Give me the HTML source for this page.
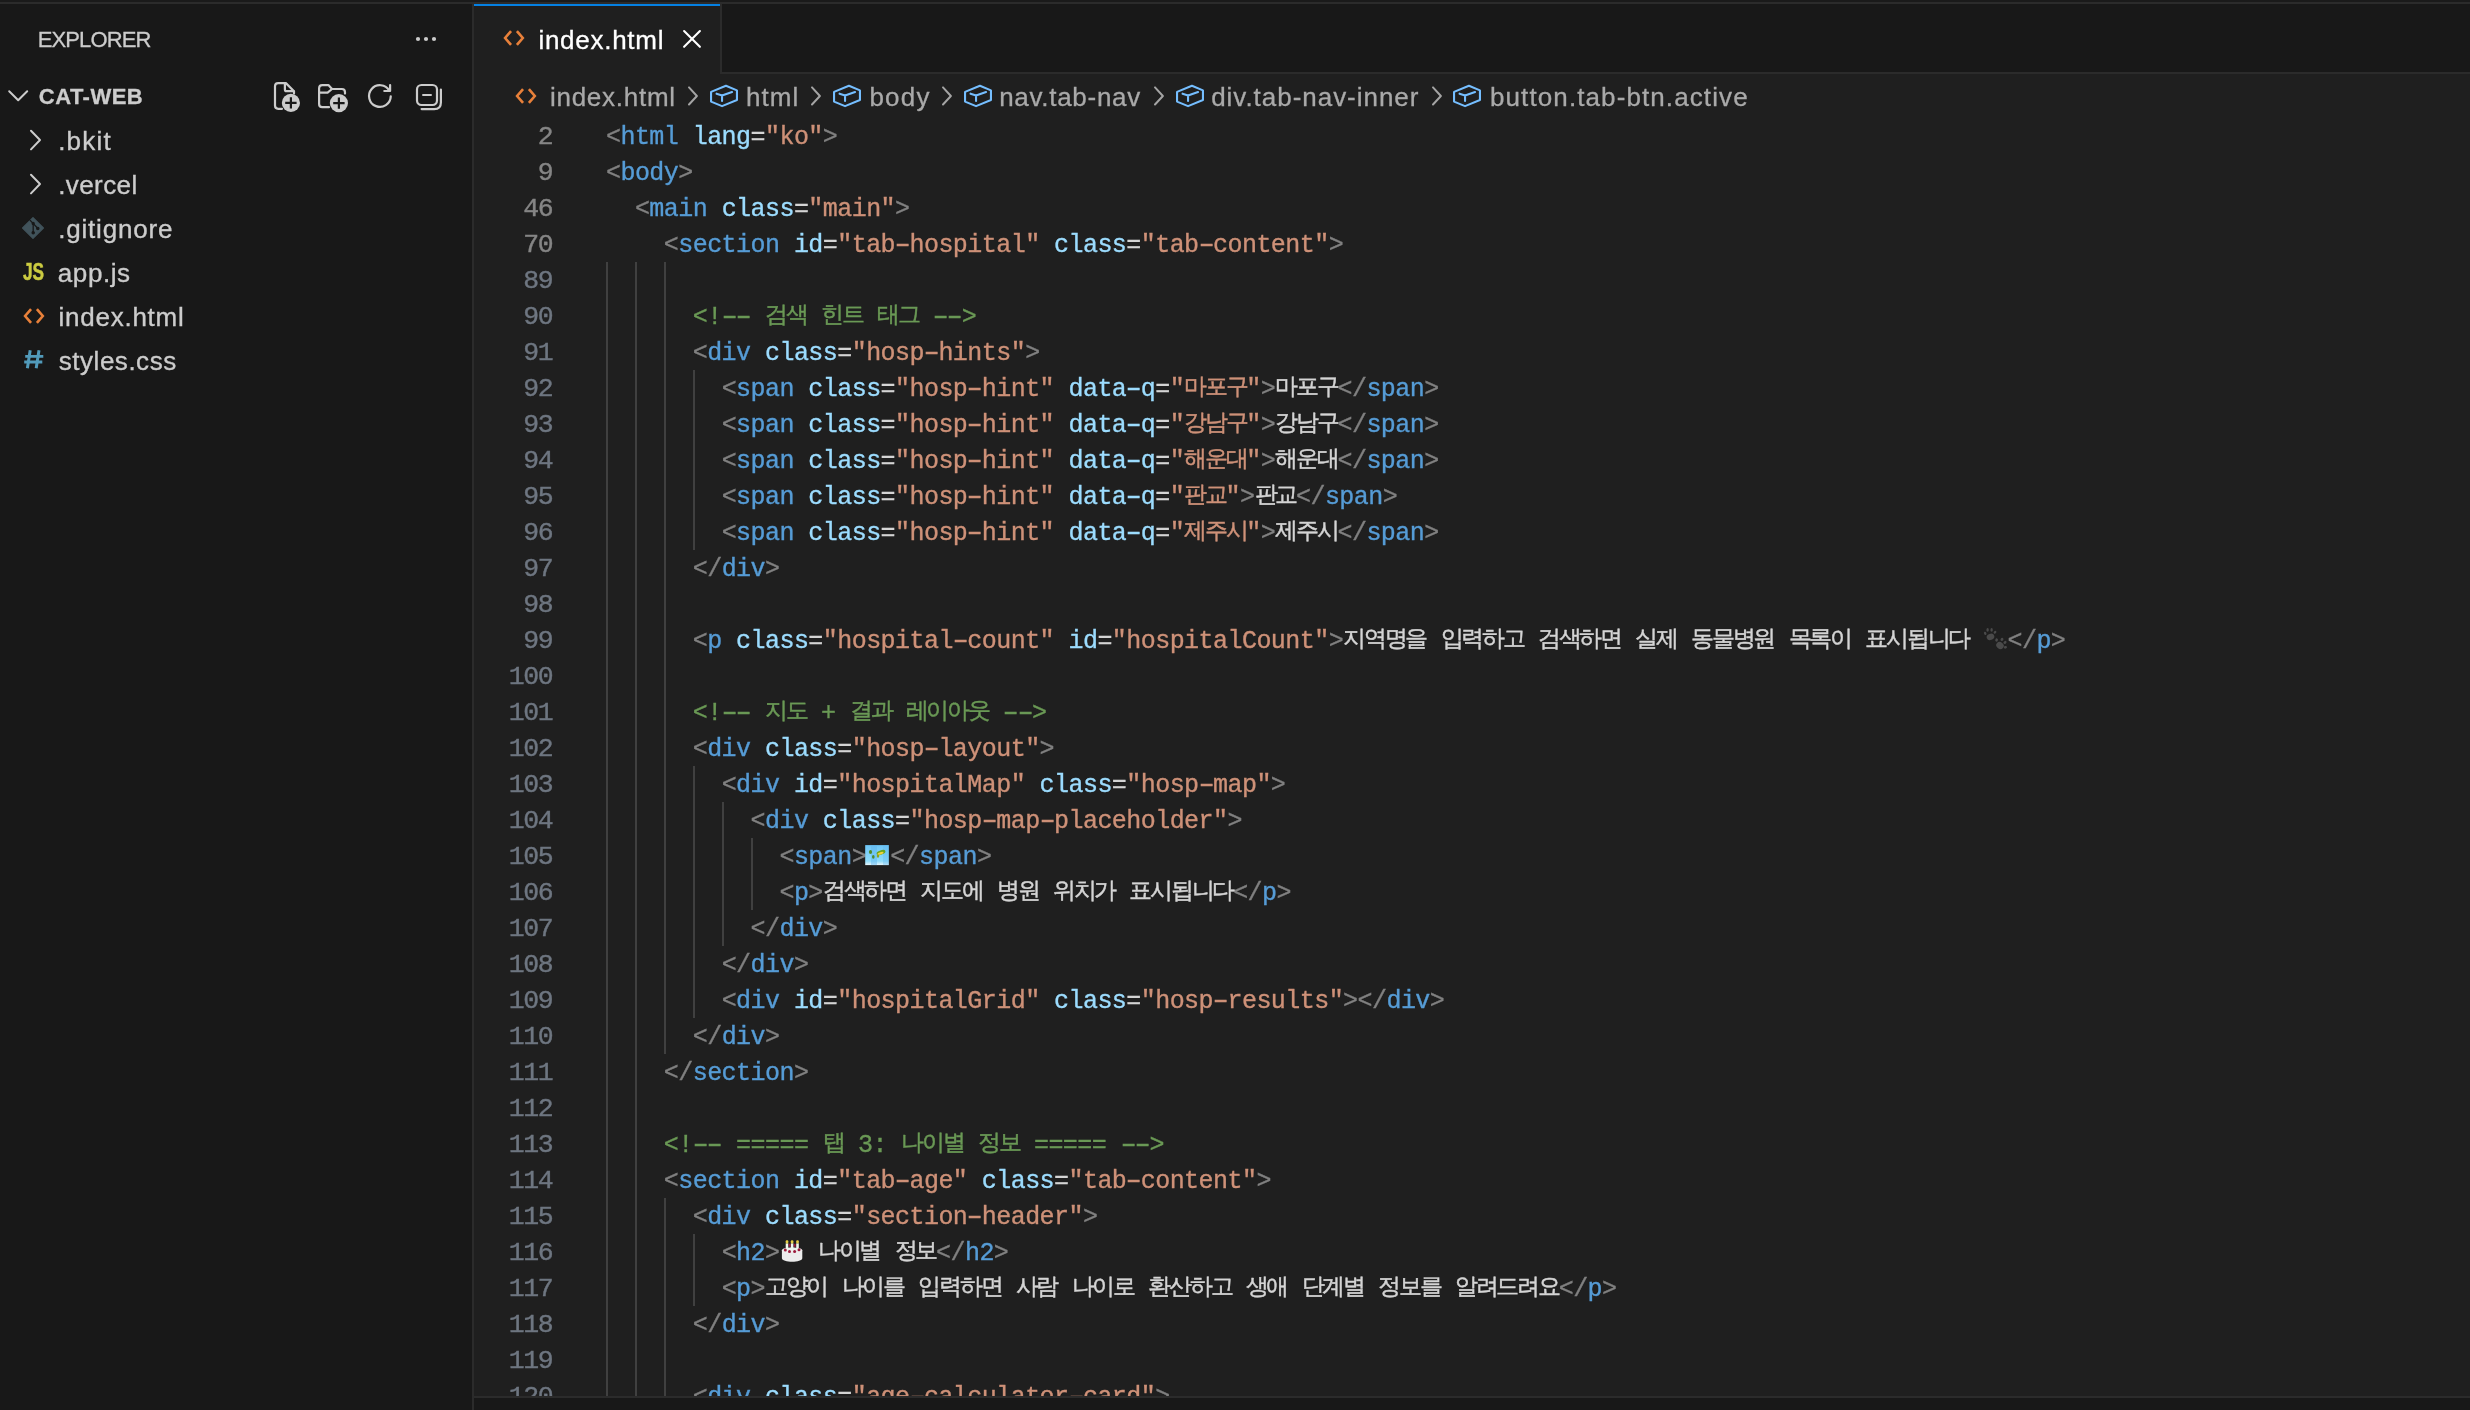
<!DOCTYPE html>
<html lang="en"><head><meta charset="utf-8"><title>index.html - cat-web</title>
<style>
*{margin:0;padding:0;box-sizing:border-box}
html,body{width:2470px;height:1410px;overflow:hidden;background:#1f1f1f}
body{position:relative;font-family:"Liberation Sans",sans-serif;color:#cccccc;-webkit-font-smoothing:antialiased}
.abs{position:absolute;display:block}
svg{display:block;overflow:visible}
#root{position:absolute;left:0;top:0;width:2470px;height:1410px;will-change:transform}
#top1{position:absolute;left:0;top:0;width:2470px;height:2px;background:#1a1a1a}
#top2{position:absolute;left:0;top:2px;width:2470px;height:2px;background:#2b2b2b}
#side{position:absolute;left:0;top:4px;width:472px;height:1406px;background:#181818}
#sideb{position:absolute;left:472px;top:4px;width:2px;height:1406px;background:#2b2b2b}
#tabs{position:absolute;left:474px;top:4px;width:1996px;height:70px;background:#181818;border-bottom:2px solid #2b2b2b}
#tab{position:absolute;left:474px;top:4px;width:248px;height:70px;background:#1f1f1f;border-right:2px solid #2b2b2b}
#tabl{position:absolute;left:474px;top:4px;width:246px;height:2px;background:#0580e2}
#tabt{-webkit-text-stroke:0.3px currentColor;position:absolute;left:538.4px;letter-spacing:0.73px;top:4px;height:70px;line-height:70px;font-size:26px;color:#ffffff;white-space:nowrap;padding-top:1px}
#bc{position:absolute;left:474px;top:74px;width:1996px;height:44px;background:#1f1f1f}
.bt{-webkit-text-stroke:0.3px currentColor;position:absolute;top:0;height:44px;line-height:44px;font-size:26px;color:#a9a9a9;white-space:nowrap;padding-top:1px}
#code{position:absolute;left:474px;top:118px;width:1996px;height:1278px;overflow:hidden;background:#1f1f1f}
#botb{position:absolute;left:474px;top:1396px;width:1996px;height:2px;background:#2b2b2b}
#bot{position:absolute;left:474px;top:1398px;width:1996px;height:12px;background:#181818}
.ln{-webkit-text-stroke:0.4px currentColor;position:absolute;left:0;width:78.2px;height:36px;line-height:36px;text-align:right;font-family:"Liberation Mono",monospace;font-size:26.5px;letter-spacing:-1.45px;color:#6e7681;white-space:pre;padding-top:1px}
.ln.st{color:#858585}
.cl{-webkit-text-stroke:0.35px currentColor;position:absolute;left:132px;height:36px;line-height:36px;font-family:"Liberation Mono",monospace;font-size:25px;letter-spacing:-0.55px;color:#cccccc;white-space:pre;padding-top:2px}
.cl span{display:inline}
.b{color:#808080}.t{color:#569cd6}.a{color:#9cdcfe}.s{color:#ce9178}.c{color:#6a9955}.x{color:#d4d4d4}
.cl span.k{line-height:1;position:relative;top:-2.4px;-webkit-text-stroke:0.45px currentColor;display:inline-block;font-size:23px;letter-spacing:-2.26px;white-space:nowrap;vertical-align:baseline;font-family:"Liberation Sans",sans-serif}
svg.e{display:inline-block;vertical-align:top;width:24px;height:36px;letter-spacing:0;position:relative;top:-3.8px}
.cl span.h{line-height:1;display:inline-block;transform:scaleX(1.65)}
.g{position:absolute;width:2px;background:#404040}
.hd{-webkit-text-stroke:0.3px currentColor;position:absolute;left:38.9px;font-size:22px;white-space:nowrap;height:44px;line-height:44px}
.row{-webkit-text-stroke:0.35px currentColor;position:absolute;left:0;width:472px;height:44px;line-height:44px;font-size:26px;color:#cccccc;white-space:nowrap;padding-top:1px}
.row .lbl{position:absolute;left:59.3px}
.jsi{-webkit-text-stroke:0.5px currentColor;position:absolute;left:23.2px;height:44px;line-height:44px;font-size:23px;font-weight:bold;color:#cbcb41;transform-origin:0 50%;transform:scaleX(.75);letter-spacing:0}
</style></head><body><div id="root">
<div id="top1"></div><div id="top2"></div>
<div id="side">
</div>
<div class="hd" style="top:18px;left:37.8px;letter-spacing:-0.9px" id="hexp">EXPLORER</div>
<div class="hd" style="top:74.5px;left:38.8px;font-weight:bold;letter-spacing:0.48px" id="hcat">CAT-WEB</div>

<svg class="abs" style="left:414px;top:35px" width="24" height="8" viewBox="0 0 24 8"><g fill="#cccccc"><circle cx="4" cy="4" r="2.1"/><circle cx="12" cy="4" r="2.1"/><circle cx="20" cy="4" r="2.1"/></g></svg>
<svg class="abs" style="left:6px;top:84px" width="24" height="24" viewBox="0 0 24 24"><path d="M3.2 7.3 L12.2 16.2 L21.2 7.3" fill="none" stroke="#cccccc" stroke-width="2" stroke-linecap="round" stroke-linejoin="round"/></svg>
<svg class="abs" style="left:268px;top:78px" width="40" height="40" viewBox="268 78 40 40"><g fill="none" stroke="#cccccc" stroke-width="2.2" stroke-linecap="round" stroke-linejoin="round"><path d="M294 93.5 L294 91.2 L285.9 83.1 L278.2 83.1 Q275 83.1 275 86.3 L275 105.6 Q275 108.8 278.2 108.8 L282 108.8"/><path d="M284.9 83.6 L284.9 89.4 Q284.9 91.2 286.7 91.2 L293.6 91.2"/></g><circle cx="290.9" cy="102.9" r="9.1" fill="#cccccc"/><path d="M285.2 102.9 L296.6 102.9 M290.9 97.2 L290.9 108.6" stroke="#181818" stroke-width="2.2" stroke-linecap="butt" fill="none"/></svg>
<svg class="abs" style="left:312px;top:78px" width="40" height="40" viewBox="312 78 40 40"><g fill="none" stroke="#cccccc" stroke-width="2.2" stroke-linecap="round" stroke-linejoin="round"><path d="M345 93.6 L345 92.2 Q345 89 341.8 89 L332 89 L328.4 85.1 L322.3 85.1 Q319.1 85.1 319.1 88.3 L319.1 104 Q319.1 107.2 322.3 107.2 L329 107.2"/><path d="M319.1 92.6 L327.6 92.6 L332 89"/></g><circle cx="338.9" cy="103.1" r="9.1" fill="#cccccc"/><path d="M333.2 103.1 L344.6 103.1 M338.9 97.4 L338.9 108.8" stroke="#181818" stroke-width="2.2" stroke-linecap="butt" fill="none"/></svg>
<svg class="abs" style="left:360px;top:78px" width="40" height="40" viewBox="360 78 40 40"><g fill="none" stroke="#cccccc" stroke-width="2.2" stroke-linecap="round" stroke-linejoin="round"><path d="M390.75 96.4 A10.85 10.85 0 1 1 389.3 90.6"/><path d="M384.3 91 L390.1 91 L390.1 85.0"/></g></svg>
<svg class="abs" style="left:408px;top:78px" width="40" height="40" viewBox="408 78 40 40"><g fill="none" stroke="#cccccc" stroke-width="2.2" stroke-linecap="round" stroke-linejoin="round"><rect x="417" y="85" width="20" height="20" rx="4.5"/><path d="M423.1 95 L430.9 95"/><path d="M440.9 89.6 L440.9 102.4 Q440.9 109.1 434.2 109.1 L421.6 109.1"/></g></svg>

<div class="row" style="top:118px"><span class="lbl" style="left:58.2px;letter-spacing:1.20px">.bkit</span></div><svg class="abs" style="left:26px;top:128px" width="20" height="24" viewBox="0 0 20 24"><path d="M5 2.8 L14 12 L5 21.4" fill="none" stroke="#cccccc" stroke-width="2" stroke-linecap="round" stroke-linejoin="round"/></svg><div class="row" style="top:162px"><span class="lbl" style="left:58.2px;letter-spacing:0.40px">.vercel</span></div><svg class="abs" style="left:26px;top:172px" width="20" height="24" viewBox="0 0 20 24"><path d="M5 2.8 L14 12 L5 21.4" fill="none" stroke="#cccccc" stroke-width="2" stroke-linecap="round" stroke-linejoin="round"/></svg><div class="row" style="top:206px"><span class="lbl" style="left:58.2px;letter-spacing:0.80px">.gitignore</span></div><svg class="abs" style="left:20.4px;top:214.5px" width="26" height="26" viewBox="-13 -13 26 26"><path d="M0 -10.4 L10.4 0 L0 10.4 L-10.4 0 Z" fill="#41535b" stroke="#41535b" stroke-width="1.2" stroke-linejoin="round"/><g stroke="#181818" stroke-width="1.3" fill="#181818" stroke-linecap="round"><path d="M0.2 -4.5 L0.2 4.6 M-2.8 -7.6 L4.7 0.3" fill="none"/><circle cx="0.2" cy="4.7" r="1.1"/><circle cx="4.8" cy="0.4" r="1.1"/><circle cx="0.2" cy="-4.6" r="1.0"/></g></svg><div class="row" style="top:250px"><span class="lbl" style="left:57.8px;letter-spacing:0.58px">app.js</span></div><div class="jsi" style="top:250px">JS</div><div class="row" style="top:294px"><span class="lbl" style="left:58.6px;letter-spacing:0.74px">index.html</span></div><svg class="abs" style="left:21.8px;top:306.6px" width="24" height="18" viewBox="-12 -9 24 18"><g fill="none" stroke="#e8803a" stroke-width="2.6" stroke-linejoin="miter" stroke-miterlimit="10"><path d="M-2.95 -6.95 L-8.9 0 L-2.95 6.95"/><path d="M2.9 -6.95 L8.8 0 L2.9 6.95"/></g></svg><div class="row" style="top:338px"><span class="lbl" style="left:58.8px;letter-spacing:0.52px">styles.css</span></div><svg class="abs" style="left:22px;top:349px" width="24" height="22" viewBox="0 0 24 22"><g stroke="#519aba" stroke-width="3" fill="none"><path d="M8.2 1.2 L5.4 19.3 M17 1.2 L14.2 19.3"/><path d="M3.2 7.4 L21.3 7.4 M2.2 13 L20.3 13" stroke-width="2.8"/></g></svg>
<div id="sideb"></div>
<div id="tabs"></div>
<div id="tab"></div><div id="tabl"></div>
<svg class="abs" style="left:501.7px;top:29.3px" width="24" height="18" viewBox="-12 -9 24 18"><g fill="none" stroke="#e8803a" stroke-width="2.6" stroke-linejoin="miter" stroke-miterlimit="10"><path d="M-2.95 -6.95 L-8.9 0 L-2.95 6.95"/><path d="M2.9 -6.95 L8.8 0 L2.9 6.95"/></g></svg>
<div id="tabt">index.html</div>
<svg class="abs" style="left:680px;top:27px" width="24" height="24" viewBox="0 0 24 24"><path d="M4.1 4.0 L19.9 19.8 M19.9 4.0 L4.1 19.8" stroke="#ffffff" stroke-width="2.1" stroke-linecap="round" fill="none"/></svg>
<div id="bc"><span class="bt" style="left:75.9px;letter-spacing:0.75px">index.html</span><span class="abs" style="left:212.1px;top:10px"><svg class="chev" width="16" height="24" viewBox="0 0 16 24"><path d="M3 3.4 L10.9 11.95 L3 20.5" fill="none" stroke="#a4a4a4" stroke-width="2" stroke-linecap="round" stroke-linejoin="round"/></svg></span><span class="abs" style="left:233.8px;top:6px"><svg class="cube" width="32" height="32" viewBox="0 0 32 32"><g fill="none" stroke="#75beff" stroke-width="2.1" stroke-linejoin="round" stroke-linecap="round"><path d="M17.95 5.7 L28.95 10.4 L28.95 20 L14.05 26.1 L3.05 21.6 L3.05 11.9 Z"/><path d="M8.55 13.7 L14.05 15.4 L24.05 12 M14.05 15.4 L14.05 20.9"/></g></svg></span><span class="bt" style="left:271.9px;letter-spacing:1.10px">html</span><span class="abs" style="left:335.2px;top:10px"><svg class="chev" width="16" height="24" viewBox="0 0 16 24"><path d="M3 3.4 L10.9 11.95 L3 20.5" fill="none" stroke="#a4a4a4" stroke-width="2" stroke-linecap="round" stroke-linejoin="round"/></svg></span><span class="abs" style="left:357.0px;top:6px"><svg class="cube" width="32" height="32" viewBox="0 0 32 32"><g fill="none" stroke="#75beff" stroke-width="2.1" stroke-linejoin="round" stroke-linecap="round"><path d="M17.95 5.7 L28.95 10.4 L28.95 20 L14.05 26.1 L3.05 21.6 L3.05 11.9 Z"/><path d="M8.55 13.7 L14.05 15.4 L24.05 12 M14.05 15.4 L14.05 20.9"/></g></svg></span><span class="bt" style="left:395.4px;letter-spacing:1.23px">body</span><span class="abs" style="left:466.2px;top:10px"><svg class="chev" width="16" height="24" viewBox="0 0 16 24"><path d="M3 3.4 L10.9 11.95 L3 20.5" fill="none" stroke="#a4a4a4" stroke-width="2" stroke-linecap="round" stroke-linejoin="round"/></svg></span><span class="abs" style="left:487.8px;top:6px"><svg class="cube" width="32" height="32" viewBox="0 0 32 32"><g fill="none" stroke="#75beff" stroke-width="2.1" stroke-linejoin="round" stroke-linecap="round"><path d="M17.95 5.7 L28.95 10.4 L28.95 20 L14.05 26.1 L3.05 21.6 L3.05 11.9 Z"/><path d="M8.55 13.7 L14.05 15.4 L24.05 12 M14.05 15.4 L14.05 20.9"/></g></svg></span><span class="bt" style="left:525.2px;letter-spacing:0.71px">nav.tab-nav</span><span class="abs" style="left:677.7px;top:10px"><svg class="chev" width="16" height="24" viewBox="0 0 16 24"><path d="M3 3.4 L10.9 11.95 L3 20.5" fill="none" stroke="#a4a4a4" stroke-width="2" stroke-linecap="round" stroke-linejoin="round"/></svg></span><span class="abs" style="left:699.7px;top:6px"><svg class="cube" width="32" height="32" viewBox="0 0 32 32"><g fill="none" stroke="#75beff" stroke-width="2.1" stroke-linejoin="round" stroke-linecap="round"><path d="M17.95 5.7 L28.95 10.4 L28.95 20 L14.05 26.1 L3.05 21.6 L3.05 11.9 Z"/><path d="M8.55 13.7 L14.05 15.4 L24.05 12 M14.05 15.4 L14.05 20.9"/></g></svg></span><span class="bt" style="left:737.2px;letter-spacing:0.97px">div.tab-nav-inner</span><span class="abs" style="left:956.2px;top:10px"><svg class="chev" width="16" height="24" viewBox="0 0 16 24"><path d="M3 3.4 L10.9 11.95 L3 20.5" fill="none" stroke="#a4a4a4" stroke-width="2" stroke-linecap="round" stroke-linejoin="round"/></svg></span><span class="abs" style="left:977.0px;top:6px"><svg class="cube" width="32" height="32" viewBox="0 0 32 32"><g fill="none" stroke="#75beff" stroke-width="2.1" stroke-linejoin="round" stroke-linecap="round"><path d="M17.95 5.7 L28.95 10.4 L28.95 20 L14.05 26.1 L3.05 21.6 L3.05 11.9 Z"/><path d="M8.55 13.7 L14.05 15.4 L24.05 12 M14.05 15.4 L14.05 20.9"/></g></svg></span><span class="bt" style="left:1016.0px;letter-spacing:1.10px">button.tab-btn.active</span></div>
<svg class="abs" style="left:513.7px;top:86.6px" width="24" height="18" viewBox="-12 -9 24 18"><g fill="none" stroke="#e8803a" stroke-width="2.6" stroke-linejoin="miter" stroke-miterlimit="10"><path d="M-2.95 -6.95 L-8.9 0 L-2.95 6.95"/><path d="M2.9 -6.95 L8.8 0 L2.9 6.95"/></g></svg>
<div id="code"><div class="ln st" style="top:0px">2</div><div class="cl" style="top:0px"><span class="b">&lt;</span><span class="t">html</span> <span class="a">lang</span><span class="x">=</span><span class="s">"ko"</span><span class="b">&gt;</span></div><div class="ln st" style="top:36px">9</div><div class="cl" style="top:36px"><span class="b">&lt;</span><span class="t">body</span><span class="b">&gt;</span></div><div class="ln st" style="top:72px">46</div><div class="cl" style="top:72px">  <span class="b">&lt;</span><span class="t">main</span> <span class="a">class</span><span class="x">=</span><span class="s">"main"</span><span class="b">&gt;</span></div><div class="ln st" style="top:108px">70</div><div class="cl" style="top:108px">    <span class="b">&lt;</span><span class="t">section</span> <span class="a">id</span><span class="x">=</span><span class="s">"tab<span class="h">-</span>hospital"</span> <span class="a">class</span><span class="x">=</span><span class="s">"tab<span class="h">-</span>content"</span><span class="b">&gt;</span></div><div class="ln" style="top:144px">89</div><div class="ln" style="top:180px">90</div><div class="cl" style="top:180px">      <span class="c">&lt;!<span class="h">-</span><span class="h">-</span> <span class="k" lang="ko" style="width:41.48px">검색</span> <span class="k" lang="ko" style="width:41.48px">힌트</span> <span class="k" lang="ko" style="width:41.48px">태그</span> <span class="h">-</span><span class="h">-</span>&gt;</span></div><div class="ln" style="top:216px">91</div><div class="cl" style="top:216px">      <span class="b">&lt;</span><span class="t">div</span> <span class="a">class</span><span class="x">=</span><span class="s">"hosp<span class="h">-</span>hints"</span><span class="b">&gt;</span></div><div class="ln" style="top:252px">92</div><div class="cl" style="top:252px">        <span class="b">&lt;</span><span class="t">span</span> <span class="a">class</span><span class="x">=</span><span class="s">"hosp<span class="h">-</span>hint"</span> <span class="a">data<span class="h">-</span>q</span><span class="x">=</span><span class="s">"<span class="k" lang="ko" style="width:62.22px">마포구</span>"</span><span class="b">&gt;</span><span class="x"><span class="k" lang="ko" style="width:62.22px">마포구</span></span><span class="b">&lt;/</span><span class="t">span</span><span class="b">&gt;</span></div><div class="ln" style="top:288px">93</div><div class="cl" style="top:288px">        <span class="b">&lt;</span><span class="t">span</span> <span class="a">class</span><span class="x">=</span><span class="s">"hosp<span class="h">-</span>hint"</span> <span class="a">data<span class="h">-</span>q</span><span class="x">=</span><span class="s">"<span class="k" lang="ko" style="width:62.22px">강남구</span>"</span><span class="b">&gt;</span><span class="x"><span class="k" lang="ko" style="width:62.22px">강남구</span></span><span class="b">&lt;/</span><span class="t">span</span><span class="b">&gt;</span></div><div class="ln" style="top:324px">94</div><div class="cl" style="top:324px">        <span class="b">&lt;</span><span class="t">span</span> <span class="a">class</span><span class="x">=</span><span class="s">"hosp<span class="h">-</span>hint"</span> <span class="a">data<span class="h">-</span>q</span><span class="x">=</span><span class="s">"<span class="k" lang="ko" style="width:62.22px">해운대</span>"</span><span class="b">&gt;</span><span class="x"><span class="k" lang="ko" style="width:62.22px">해운대</span></span><span class="b">&lt;/</span><span class="t">span</span><span class="b">&gt;</span></div><div class="ln" style="top:360px">95</div><div class="cl" style="top:360px">        <span class="b">&lt;</span><span class="t">span</span> <span class="a">class</span><span class="x">=</span><span class="s">"hosp<span class="h">-</span>hint"</span> <span class="a">data<span class="h">-</span>q</span><span class="x">=</span><span class="s">"<span class="k" lang="ko" style="width:41.48px">판교</span>"</span><span class="b">&gt;</span><span class="x"><span class="k" lang="ko" style="width:41.48px">판교</span></span><span class="b">&lt;/</span><span class="t">span</span><span class="b">&gt;</span></div><div class="ln" style="top:396px">96</div><div class="cl" style="top:396px">        <span class="b">&lt;</span><span class="t">span</span> <span class="a">class</span><span class="x">=</span><span class="s">"hosp<span class="h">-</span>hint"</span> <span class="a">data<span class="h">-</span>q</span><span class="x">=</span><span class="s">"<span class="k" lang="ko" style="width:62.22px">제주시</span>"</span><span class="b">&gt;</span><span class="x"><span class="k" lang="ko" style="width:62.22px">제주시</span></span><span class="b">&lt;/</span><span class="t">span</span><span class="b">&gt;</span></div><div class="ln" style="top:432px">97</div><div class="cl" style="top:432px">      <span class="b">&lt;/</span><span class="t">div</span><span class="b">&gt;</span></div><div class="ln" style="top:468px">98</div><div class="ln" style="top:504px">99</div><div class="cl" style="top:504px">      <span class="b">&lt;</span><span class="t">p</span> <span class="a">class</span><span class="x">=</span><span class="s">"hospital<span class="h">-</span>count"</span> <span class="a">id</span><span class="x">=</span><span class="s">"hospitalCount"</span><span class="b">&gt;</span><span class="x"><span class="k" lang="ko" style="width:82.96px">지역명을</span> <span class="k" lang="ko" style="width:82.96px">입력하고</span> <span class="k" lang="ko" style="width:82.96px">검색하면</span> <span class="k" lang="ko" style="width:41.48px">실제</span> <span class="k" lang="ko" style="width:82.96px">동물병원</span> <span class="k" lang="ko" style="width:62.22px">목록이</span> <span class="k" lang="ko" style="width:103.70px">표시됩니다</span> <svg class="e" role="img" aria-label="paw prints" viewBox="0 0 24 36" width="24" height="36"><g fill="#4a4a4a"><ellipse cx="7.5" cy="16.8" rx="3.9" ry="3.1" transform="rotate(-20 7.5 16.8)"/><ellipse cx="2.2" cy="13.4" rx="1.2" ry="1.7" transform="rotate(-20 2.2 13.4)"/><ellipse cx="4.6" cy="9.9" rx="1.2" ry="1.8"/><ellipse cx="8.6" cy="9.9" rx="1.2" ry="1.8"/><ellipse cx="12" cy="12.3" rx="1.2" ry="1.6" transform="rotate(40 12 12.3)"/><ellipse cx="17" cy="25.5" rx="3.9" ry="3.4" transform="rotate(40 17 25.5)"/><ellipse cx="13.6" cy="20" rx="1.3" ry="1.7" transform="rotate(20 13.6 20)"/><ellipse cx="19" cy="19.4" rx="1.4" ry="1.7" transform="rotate(30 19 19.4)"/><ellipse cx="22" cy="22.4" rx="1.3" ry="1.7" transform="rotate(50 22 22.4)"/><ellipse cx="22.4" cy="27.3" rx="1.3" ry="1.6" transform="rotate(80 22.4 27.3)"/></g></svg></span><span class="b">&lt;/</span><span class="t">p</span><span class="b">&gt;</span></div><div class="ln" style="top:540px">100</div><div class="ln" style="top:576px">101</div><div class="cl" style="top:576px">      <span class="c">&lt;!<span class="h">-</span><span class="h">-</span> <span class="k" lang="ko" style="width:41.48px">지도</span> + <span class="k" lang="ko" style="width:41.48px">결과</span> <span class="k" lang="ko" style="width:82.96px">레이아웃</span> <span class="h">-</span><span class="h">-</span>&gt;</span></div><div class="ln" style="top:612px">102</div><div class="cl" style="top:612px">      <span class="b">&lt;</span><span class="t">div</span> <span class="a">class</span><span class="x">=</span><span class="s">"hosp<span class="h">-</span>layout"</span><span class="b">&gt;</span></div><div class="ln" style="top:648px">103</div><div class="cl" style="top:648px">        <span class="b">&lt;</span><span class="t">div</span> <span class="a">id</span><span class="x">=</span><span class="s">"hospitalMap"</span> <span class="a">class</span><span class="x">=</span><span class="s">"hosp<span class="h">-</span>map"</span><span class="b">&gt;</span></div><div class="ln" style="top:684px">104</div><div class="cl" style="top:684px">          <span class="b">&lt;</span><span class="t">div</span> <span class="a">class</span><span class="x">=</span><span class="s">"hosp<span class="h">-</span>map<span class="h">-</span>placeholder"</span><span class="b">&gt;</span></div><div class="ln" style="top:720px">105</div><div class="cl" style="top:720px">            <span class="b">&lt;</span><span class="t">span</span><span class="b">&gt;</span><span class="x"><svg class="e" role="img" aria-label="world map" style="left:-0.8px" viewBox="0 0 24 36" width="24" height="36"><defs><linearGradient id="mg" x1="0" y1="0" x2="0" y2="1"><stop offset="0" stop-color="#6ec6f7"/><stop offset=".8" stop-color="#8fdcfa"/><stop offset="1" stop-color="#e8f6fb"/></linearGradient></defs><rect x="0.2" y="9.1" width="23.6" height="20" fill="url(#mg)"/><rect x="6" y="9.1" width="6" height="20" fill="#5fb4ee" opacity=".45"/><rect x="18" y="9.1" width="5.8" height="20" fill="#5fb4ee" opacity=".35"/><ellipse cx="16" cy="16.5" rx="4.6" ry="2.2" fill="#6aa51e" transform="rotate(-18 16 16.5)"/><ellipse cx="15.5" cy="17.4" rx="3.2" ry="1.2" fill="#f0d23c" transform="rotate(-18 15.5 17.4)"/><ellipse cx="13" cy="20" rx="1.2" ry="1.8" fill="#8aa51e"/><ellipse cx="5.5" cy="16" rx="1.6" ry="1.9" fill="#4f8a2a"/><ellipse cx="8.3" cy="20.8" rx="1.3" ry="1.9" fill="#4f8a2a"/></svg></span><span class="b">&lt;/</span><span class="t">span</span><span class="b">&gt;</span></div><div class="ln" style="top:756px">106</div><div class="cl" style="top:756px">            <span class="b">&lt;</span><span class="t">p</span><span class="b">&gt;</span><span class="x"><span class="k" lang="ko" style="width:82.96px">검색하면</span> <span class="k" lang="ko" style="width:62.22px">지도에</span> <span class="k" lang="ko" style="width:41.48px">병원</span> <span class="k" lang="ko" style="width:62.22px">위치가</span> <span class="k" lang="ko" style="width:103.70px">표시됩니다</span></span><span class="b">&lt;/</span><span class="t">p</span><span class="b">&gt;</span></div><div class="ln" style="top:792px">107</div><div class="cl" style="top:792px">          <span class="b">&lt;/</span><span class="t">div</span><span class="b">&gt;</span></div><div class="ln" style="top:828px">108</div><div class="cl" style="top:828px">        <span class="b">&lt;/</span><span class="t">div</span><span class="b">&gt;</span></div><div class="ln" style="top:864px">109</div><div class="cl" style="top:864px">        <span class="b">&lt;</span><span class="t">div</span> <span class="a">id</span><span class="x">=</span><span class="s">"hospitalGrid"</span> <span class="a">class</span><span class="x">=</span><span class="s">"hosp<span class="h">-</span>results"</span><span class="b">&gt;</span><span class="b">&lt;/</span><span class="t">div</span><span class="b">&gt;</span></div><div class="ln" style="top:900px">110</div><div class="cl" style="top:900px">      <span class="b">&lt;/</span><span class="t">div</span><span class="b">&gt;</span></div><div class="ln" style="top:936px">111</div><div class="cl" style="top:936px">    <span class="b">&lt;/</span><span class="t">section</span><span class="b">&gt;</span></div><div class="ln" style="top:972px">112</div><div class="ln" style="top:1008px">113</div><div class="cl" style="top:1008px">    <span class="c">&lt;!<span class="h">-</span><span class="h">-</span> ===== <span class="k" lang="ko" style="width:20.74px">탭</span> 3: <span class="k" lang="ko" style="width:62.22px">나이별</span> <span class="k" lang="ko" style="width:41.48px">정보</span> ===== <span class="h">-</span><span class="h">-</span>&gt;</span></div><div class="ln" style="top:1044px">114</div><div class="cl" style="top:1044px">    <span class="b">&lt;</span><span class="t">section</span> <span class="a">id</span><span class="x">=</span><span class="s">"tab<span class="h">-</span>age"</span> <span class="a">class</span><span class="x">=</span><span class="s">"tab<span class="h">-</span>content"</span><span class="b">&gt;</span></div><div class="ln" style="top:1080px">115</div><div class="cl" style="top:1080px">      <span class="b">&lt;</span><span class="t">div</span> <span class="a">class</span><span class="x">=</span><span class="s">"section<span class="h">-</span>header"</span><span class="b">&gt;</span></div><div class="ln" style="top:1116px">116</div><div class="cl" style="top:1116px">        <span class="b">&lt;</span><span class="t">h2</span><span class="b">&gt;</span><span class="x"><svg class="e" role="img" aria-label="birthday cake" style="left:0.7px" viewBox="0 0 24 36" width="24" height="36"><path d="M1.9 18.3 C1.9 14.5 22.3 14.5 22.3 18.3 L22.3 26 C22.3 31 1.9 31 1.9 26 Z" fill="#ececec"/><g fill="#eef7ee"><rect x="5.7" y="11.3" width="2.6" height="7"/><rect x="10.8" y="11.3" width="2.6" height="7"/><rect x="16.2" y="11.3" width="2.6" height="7"/></g><g fill="#e6cf45"><rect x="5.7" y="8.2" width="2.6" height="3.3" rx="1"/><rect x="10.8" y="8.2" width="2.6" height="3.3" rx="1"/><rect x="16.2" y="8.2" width="2.6" height="3.3" rx="1"/></g><g fill="#9c1a3c"><circle cx="5.3" cy="18.1" r="1.5"/><circle cx="9.5" cy="19.5" r="1.5"/><circle cx="14.6" cy="19.5" r="1.5"/><circle cx="19" cy="17.8" r="1.5"/><rect x="8.6" y="11.8" width="1.9" height="3"/><rect x="13.8" y="11.8" width="1.9" height="3"/></g></svg> <span class="k" lang="ko" style="width:62.22px">나이별</span> <span class="k" lang="ko" style="width:41.48px">정보</span></span><span class="b">&lt;/</span><span class="t">h2</span><span class="b">&gt;</span></div><div class="ln" style="top:1152px">117</div><div class="cl" style="top:1152px">        <span class="b">&lt;</span><span class="t">p</span><span class="b">&gt;</span><span class="x"><span class="k" lang="ko" style="width:62.22px">고양이</span> <span class="k" lang="ko" style="width:62.22px">나이를</span> <span class="k" lang="ko" style="width:82.96px">입력하면</span> <span class="k" lang="ko" style="width:41.48px">사람</span> <span class="k" lang="ko" style="width:62.22px">나이로</span> <span class="k" lang="ko" style="width:82.96px">환산하고</span> <span class="k" lang="ko" style="width:41.48px">생애</span> <span class="k" lang="ko" style="width:62.22px">단계별</span> <span class="k" lang="ko" style="width:62.22px">정보를</span> <span class="k" lang="ko" style="width:103.70px">알려드려요</span></span><span class="b">&lt;/</span><span class="t">p</span><span class="b">&gt;</span></div><div class="ln" style="top:1188px">118</div><div class="cl" style="top:1188px">      <span class="b">&lt;/</span><span class="t">div</span><span class="b">&gt;</span></div><div class="ln" style="top:1224px">119</div><div class="ln" style="top:1260px">120</div><div class="cl" style="top:1260px">      <span class="b">&lt;</span><span class="t">div</span> <span class="a">class</span><span class="x">=</span><span class="s">"age<span class="h">-</span>calculator<span class="h">-</span>card"</span><span class="b">&gt;</span></div><div class="g" style="left:132.0px;top:144px;height:1152px"></div><div class="g" style="left:160.9px;top:144px;height:1152px"></div><div class="g" style="left:189.8px;top:144px;height:792px"></div><div class="g" style="left:189.8px;top:1080px;height:216px"></div><div class="g" style="left:218.7px;top:252px;height:180px"></div><div class="g" style="left:218.7px;top:648px;height:252px"></div><div class="g" style="left:218.7px;top:1116px;height:72px"></div><div class="g" style="left:247.6px;top:684px;height:144px"></div><div class="g" style="left:276.5px;top:720px;height:72px"></div></div>
<div id="botb"></div><div id="bot"></div>
</div></body></html>
